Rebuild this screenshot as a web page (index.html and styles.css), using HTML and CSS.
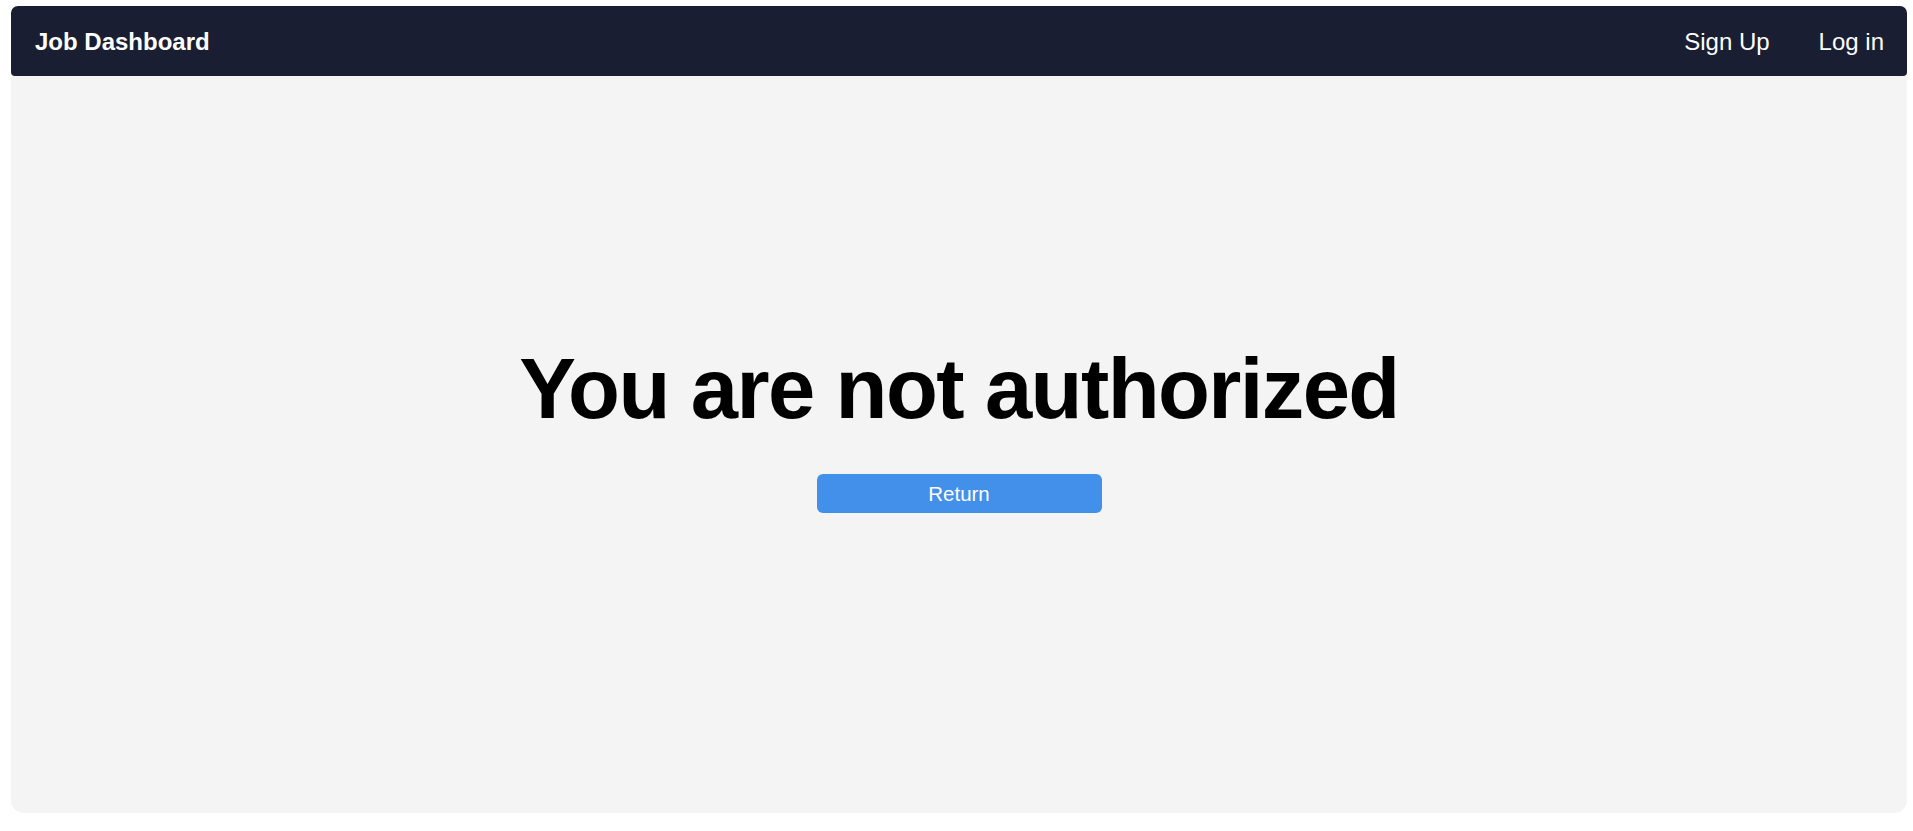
FILE: index.html
```html
<!DOCTYPE html>
<html lang="en">
<head>
<meta charset="utf-8">
<title>Job Dashboard</title>
<link rel="stylesheet" href="styles.css">
</head>
<body>
<div class="app">
  <nav class="navbar">
    <a class="brand" href="#">Job Dashboard</a>
    <div class="nav-links">
      <a class="nav-link" href="#">Sign Up</a>
      <a class="nav-link" href="#">Log in</a>
    </div>
  </nav>
  <main class="content">
    <h1 class="title">You are not authorized</h1>
    <button class="return-btn" type="button">Return</button>
  </main>
</div>
</body>
</html>
```

FILE: styles.css
```css
* { box-sizing: border-box; }
html, body { margin: 0; padding: 0; background: #ffffff; }
body {
  font-family: "Liberation Sans", Arial, sans-serif;
  padding: 6px 6px 18px 11px;
  height: 831px;
}
.app {
  height: 100%;
  display: flex;
  flex-direction: column;
}
.navbar {
  height: 70px;
  flex: 0 0 70px;
  background: #1a1e32;
  border-radius: 7px 7px 4px 4px;
  display: flex;
  align-items: center;
  justify-content: space-between;
  padding: 1px 23px 0 24px;
}
.brand {
  color: #ffffff;
  font-weight: bold;
  font-size: 24px;
  text-decoration: none;
}
.nav-links {
  display: flex;
  gap: 49px;
}
.nav-link {
  color: #ffffff;
  font-size: 24px;
  text-decoration: none;
}
.content {
  flex: 1;
  background: #f4f4f4;
  border-radius: 0 0 13px 13px;
  display: flex;
  flex-direction: column;
  align-items: center;
  justify-content: center;
  padding-bottom: 37px;
}
.title {
  margin: 0 0 36px 0;
  font-size: 85px;
  line-height: 99px;
  font-weight: bold;
  letter-spacing: -1.6px;
  color: #000000;
}
.return-btn {
  width: 285px;
  height: 39px;
  border: none;
  border-radius: 6px;
  background: #4390ea;
  color: #ffffff;
  font-family: "Liberation Sans", Arial, sans-serif;
  font-size: 20.5px;
  cursor: pointer;
}
```
